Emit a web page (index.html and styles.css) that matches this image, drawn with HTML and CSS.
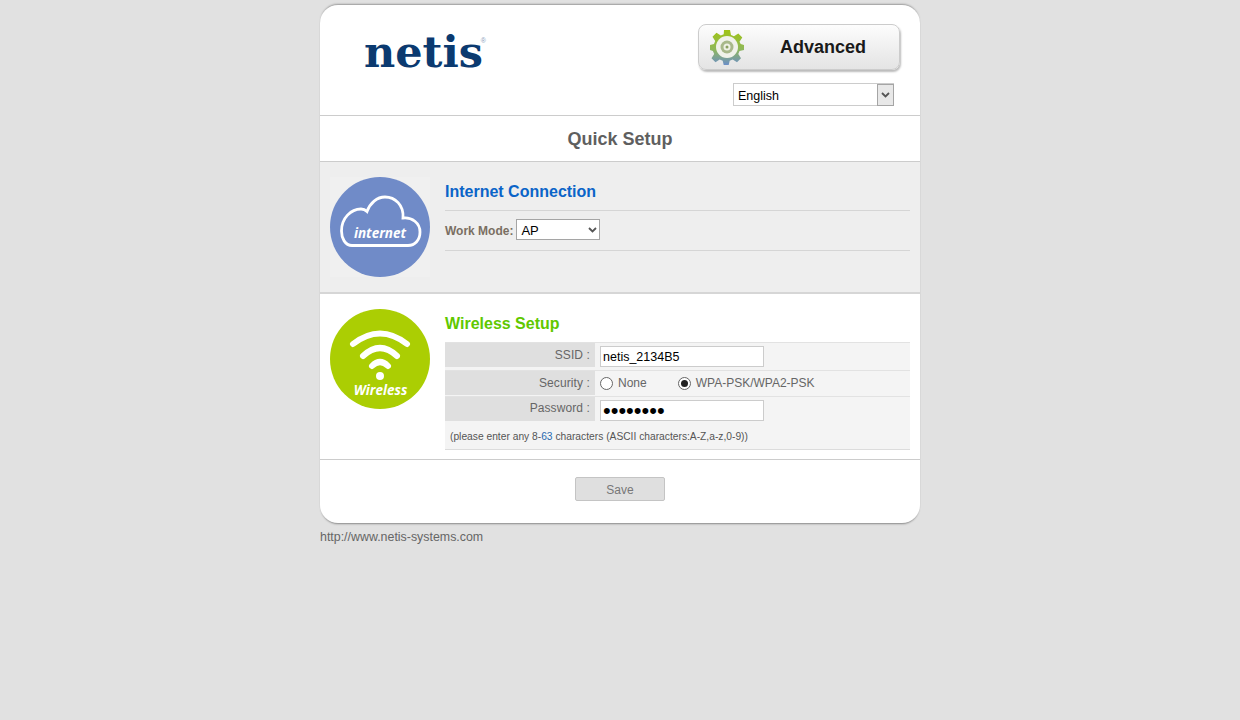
FILE: index.html
```html
<!DOCTYPE html>
<html lang="en">
<head>
    <meta charset="UTF-8">
    <title>netis Quick Setup</title>
    <link rel="stylesheet" href="styles.css">
</head>
<body>
    <div class="container">
        <div class="card">
            <div class="top">
                <div class="logo">netis<span class="reg">®</span></div>
                <div class="top-right">
                    <div class="adv-btn">
                        <svg class="gear" width="36" height="36" viewBox="0 0 36 36">
                            <defs>
                                <linearGradient id="gearFill" x1="0" y1="0" x2="0" y2="1">
                                    <stop offset="0" stop-color="#a0c414"/>
                                    <stop offset="0.55" stop-color="#8fb85a"/>
                                    <stop offset="1" stop-color="#6c8fc8"/>
                                </linearGradient>
                            </defs>
                            <path fill="url(#gearFill)" d="M15 1h6l1 5 3 1.300 4.300-2.800 4 4-2.800 4.300L31.700 15l3.300 1v5l-4.500 1-1.200 3 2.700 4.300-4 4-4.300-2.700-3 1.200L19.700 36h-5l-1-4.200-3-1.200-4.200 2.700-4-4 2.700-4.300-1.300-3L1 21v-5l4-1 1.200-3-2.700-4.200 4-4 4.300 2.700 2.900-1.200z"/>
                            <circle cx="18" cy="18" r="11" fill="#f0f2ea"/>
                            <circle cx="18" cy="18" r="6.500" fill="#a8b88a"/>
                            <circle cx="18" cy="18" r="3.500" fill="#eef0e4"/>
                            <circle cx="18" cy="18" r="1.500" fill="#8aa060"/>
                        </svg>
                        <span class="adv-text">Advanced</span>
                    </div>
                    <div class="lang-wrap">
                        <select class="lang-select">
                            <option>English</option>
                        </select>
                        <span class="lang-arrow">
                            <svg width="9" height="6" viewBox="0 0 9 6"><path d="M1 1l3.500 3.500L8 1" fill="none" stroke="#555" stroke-width="1.800"/></svg>
                        </span>
                    </div>
                </div>
            </div>

            <div class="title-bar">Quick Setup</div>

            <div class="section section-gray">
                <svg class="round-icon" width="100" height="100" viewBox="0 0 100 100">
                    <rect width="100" height="100" fill="#f0f0f0"/>
                    <circle cx="50" cy="50" r="50" fill="#708bc8"/>
                    <path d="M22 68.500C15 68.500 11.500 61 11.500 54 11.500 41 21 32 31 32c2.500 0 4.500 1 6 2.500C40 26 47 20 55 20c10 0 19 8 18 21 9-1 17 5 17 14 0 8-5 13.500-12 13.500z" fill="none" stroke="#fff" stroke-width="2.800"/>
                    <text class="icon-label" x="50" y="60.500" text-anchor="middle" font-size="13.500">internet</text>
                </svg>
                <div class="section-body">
                    <h2 class="section-title title-blue">Internet Connection</h2>
                    <div class="mode-row">
                        <label class="mode-label">Work Mode:</label>
                        <div class="mode-wrap">
                            <select class="mode-select">
                                <option>AP</option>
                            </select>
                            <svg class="mode-arrow" width="9" height="6" viewBox="0 0 9 6"><path d="M1 1l3.500 3.500L8 1" fill="none" stroke="#555" stroke-width="1.800"/></svg>
                        </div>
                    </div>
                </div>
            </div>

            <div class="section section-white">
                <svg class="round-icon" width="100" height="100" viewBox="0 0 100 100">
                    <circle cx="50" cy="50" r="50" fill="#abce03"/>
                    <g fill="none" stroke="#fff" stroke-linecap="round">
                        <path d="M23 35Q50 14 77 35" stroke-width="6"/>
                        <path d="M33 47Q50 31 67 47" stroke-width="6"/>
                        <path d="M42 57Q50 49 58 57" stroke-width="6"/>
                    </g>
                    <circle cx="50" cy="67" r="4" fill="#fff"/>
                    <text class="icon-label" x="50.500" y="86" text-anchor="middle" font-size="13.500">Wireless</text>
                </svg>
                <div class="section-body">
                    <h2 class="section-title title-green">Wireless Setup</h2>
                    <div class="form-table">
                        <div class="form-row row-ssid">
                            <div class="row-label">SSID :</div>
                            <div class="row-value"><input class="text-input" type="text" value="netis_2134B5"></div>
                        </div>
                        <div class="form-row row-security">
                            <div class="row-label">Security :</div>
                            <div class="row-value">
                                <span class="radio"></span><span class="radio-text radio-none">None</span>
                                <span class="radio radio-on"></span><span class="radio-text">WPA-PSK/WPA2-PSK</span>
                            </div>
                        </div>
                        <div class="form-row row-pass">
                            <div class="row-label">Password :</div>
                            <div class="row-value"><input class="text-input pass-input" type="password" value="12345678"></div>
                        </div>
                        <div class="hint-row">(please enter any 8-<span class="hint-num">63</span> characters (ASCII characters:A-Z,a-z,0-9))</div>
                    </div>
                </div>
            </div>

            <div class="bottom">
                <button class="save-btn">Save</button>
            </div>
        </div>
        <div class="site-link">http://www.netis-systems.com</div>
    </div>
</body>
</html>
```

FILE: styles.css
```css
body {
    margin: 0;
    background: #e1e1e1;
    font-family: "Liberation Sans", Arial, sans-serif;
    color: #666;
}

.container {
    width: 600px;
    margin: 0 auto;
    padding-top: 5px;
}

.card {
    background: #fff;
    border-radius: 18px;
    overflow: hidden;
    box-shadow: 0 2px 2px -1px #888, 0 -2px 2px -1px #999;
}

.top {
    height: 111px;
    box-sizing: border-box;
    display: flex;
    justify-content: space-between;
    border-bottom: 1px solid #ccc;
}

.logo {
    margin: 22px 0 0 44px;
    font-family: "DejaVu Serif", serif;
    font-weight: bold;
    font-size: 43px;
    line-height: 50px;
    color: #0b3a70;
    position: relative;
    height: 50px;
}

.reg {
    position: absolute;
    right: -3px;
    top: 10px;
    font-family: "Liberation Sans", sans-serif;
    font-size: 7px;
    line-height: 7px;
    font-weight: normal;
    color: #8aa0bb;
}

.top-right {
    width: 222px;
    padding-top: 19px;
}

.adv-btn {
    width: 200px;
    height: 44px;
    display: flex;
    align-items: center;
    border: 1px solid #ccc;
    border-radius: 8px;
    background: linear-gradient(#fdfdfd, #f0f0f0 50%, #e4e4e4);
    box-shadow: 1px 2px 2px #bbb;
}

.gear {
    margin-left: 10px;
}

.adv-text {
    margin-left: 35px;
    padding-top: 1px;
    font-size: 18px;
    font-weight: bold;
    color: #1a1a1a;
}

.lang-wrap {
    position: relative;
    width: 161px;
    height: 23px;
    margin: 13px 0 0 35px;
}

.lang-select {
    width: 161px;
    height: 23px;
    box-sizing: border-box;
    appearance: none;
    border: 1px solid #ccc;
    border-radius: 0;
    background: #fff;
    padding: 2px 0 0 4px;
    font-family: "Liberation Sans", Arial, sans-serif;
    font-size: 12.5px;
    color: #000;
}

.lang-arrow {
    position: absolute;
    right: 0;
    top: 1px;
    width: 15px;
    height: 20px;
    border: 1px solid #a5a5a5;
    background: #e8e8e8;
    display: flex;
    align-items: center;
    justify-content: center;
}

.title-bar {
    height: 46px;
    box-sizing: border-box;
    border-bottom: 1px solid #ccc;
    text-align: center;
    font-size: 18px;
    font-weight: bold;
    line-height: 46px;
    color: #5f5f5f;
}

.section {
    display: flex;
    box-sizing: border-box;
    padding: 15px 10px 0;
}

.section-gray {
    height: 132px;
    background: #eee;
    border-bottom: 2px solid #d6d6d6;
}

.section-white {
    height: 166px;
    border-bottom: 1px solid #ccc;
}

.round-icon {
    flex: none;
    display: block;
}

.icon-label {
    font-family: "Open Sans", "Liberation Sans", sans-serif;
    font-weight: bold;
    font-style: italic;
    fill: #fff;
}

.section-body {
    flex: 1;
    margin-left: 15px;
}

.section-title {
    margin: 0;
    font-size: 16px;
    line-height: 18px;
    padding-top: 6px;
    font-weight: bold;
}

.title-blue {
    color: #0a64c8;
    padding-bottom: 9px;
    border-bottom: 1px solid #d5d5d5;
}

.title-green {
    color: #5fc800;
    padding-bottom: 9px;
}

.mode-row {
    height: 40px;
    box-sizing: border-box;
    display: flex;
    align-items: center;
    border-bottom: 1px solid #d5d5d5;
}

.mode-label {
    font-size: 12px;
    font-weight: bold;
    color: #7a6e62;
    margin-right: 3px;
}

.mode-wrap {
    position: relative;
    width: 84px;
    height: 21px;
    margin-bottom: 2px;
}

.mode-select {
    width: 84px;
    height: 21px;
    box-sizing: border-box;
    appearance: none;
    border: 1px solid #a5a5a5;
    border-radius: 0;
    background: #fff;
    padding: 2px 0 0 4px;
    font-family: "Liberation Sans", Arial, sans-serif;
    font-size: 13px;
    color: #000;
}

.mode-arrow {
    position: absolute;
    right: 3px;
    top: 8px;
}

.form-table {
    border-top: 1px solid #e2e2e2;
    background: #f4f4f4;
    border-bottom: 1px solid #dcdcdc;
}

.form-row {
    display: grid;
    grid-template-columns: 150px 1fr;
}

.row-ssid {
    height: 27px;
    border-bottom: 1px solid #e2e2e2;
}

.row-security {
    height: 25px;
    border-bottom: 1px solid #e2e2e2;
}

.row-pass {
    height: 25px;
}

.row-pass .row-label {
    line-height: 23px;
}

.row-label {
    background: #dfdfdf;
    text-align: right;
    padding-right: 5px;
    font-size: 12px;
    letter-spacing: 0.1px;
    line-height: 24px;
    color: #666;
    height: 24px;
}

.row-value {
    display: flex;
    align-items: center;
    padding-left: 5px;
    height: 24px;
    font-size: 12px;
}

.text-input {
    width: 164px;
    height: 21px;
    box-sizing: border-box;
    margin-top: 3px;
    border: 1px solid #ccc;
    padding: 0 2px;
    background: #fff;
    font-family: "Liberation Sans", Arial, sans-serif;
    font-size: 12.5px;
    color: #000;
}

.pass-input {
    font-size: 22px;
}

.radio {
    width: 13px;
    height: 13px;
    box-sizing: border-box;
    border: 1px solid #666;
    border-radius: 50%;
    background: #fff;
    position: relative;
}

.radio-on::after {
    content: "";
    position: absolute;
    left: 2px;
    top: 2px;
    width: 7px;
    height: 7px;
    border-radius: 50%;
    background: #222;
}

.radio-text {
    margin-left: 5px;
    color: #666;
}

.radio-none {
    margin-right: 31px;
}

.hint-row {
    height: 27px;
    padding-left: 5px;
    font-size: 10.25px;
    line-height: 30px;
    color: #555;
}

.hint-num {
    color: #2a6ab0;
}

.bottom {
    height: 63px;
    display: flex;
    justify-content: center;
    padding-top: 17px;
    box-sizing: border-box;
}

.save-btn {
    width: 90px;
    height: 24px;
    border: 1px solid #c4c4c4;
    border-radius: 2px;
    background: #dfdfdf;
    color: #777;
    font-family: "Liberation Sans", Arial, sans-serif;
    font-size: 12px;
    padding: 2px 0 0;
}

.site-link {
    margin-top: 6px;
    font-size: 12.4px;
    line-height: 16px;
    color: #666;
}
```
